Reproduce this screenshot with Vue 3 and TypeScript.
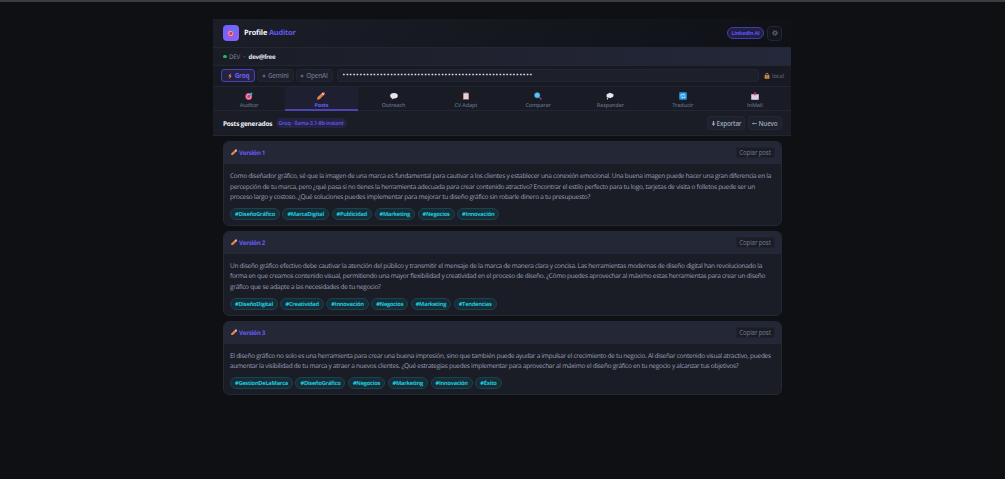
<script setup lang="ts">
interface Tab { id: string; label: string }
interface Post { title: string; lines: string[]; tags: string[] }

const tabs: Tab[] = [
  { id: 'target', label: 'Auditor' },
  { id: 'pencil', label: 'Posts' },
  { id: 'speech', label: 'Outreach' },
  { id: 'clipboard', label: 'CV Adapt' },
  { id: 'search', label: 'Comparar' },
  { id: 'thought', label: 'Responder' },
  { id: 'refresh', label: 'Traducir' },
  { id: 'mail', label: 'InMail' },
]

const posts: Post[] = [
  {
    title: 'Versión 1',
    lines: [
      'Como diseñador gráfico, sé que la imagen de una marca es fundamental para cautivar a los clientes y establecer una conexión emocional. Una buena imagen puede hacer una gran diferencia en la',
      'percepción de tu marca, pero ¿qué pasa si no tienes la herramienta adecuada para crear contenido atractivo? Encontrar el estilo perfecto para tu logo, tarjetas de visita o folletos puede ser un',
      'proceso largo y costoso. ¿Qué soluciones puedes implementar para mejorar tu diseño gráfico sin robarle dinero a tu presupuesto?',
    ],
    tags: ['#DiseñoGráfico', '#MarcaDigital', '#Publicidad', '#Marketing', '#Negocios', '#Innovación'],
  },
  {
    title: 'Versión 2',
    lines: [
      'Un diseño gráfico efectivo debe cautivar la atención del público y transmitir el mensaje de la marca de manera clara y concisa. Las herramientas modernas de diseño digital han revolucionado la',
      'forma en que creamos contenido visual, permitiendo una mayor flexibilidad y creatividad en el proceso de diseño. ¿Cómo puedes aprovechar al máximo estas herramientas para crear un diseño',
      'gráfico que se adapte a las necesidades de tu negocio?',
    ],
    tags: ['#DiseñoDigital', '#Creatividad', '#Innovación', '#Negocios', '#Marketing', '#Tendencias'],
  },
  {
    title: 'Versión 3',
    lines: [
      'El diseño gráfico no solo es una herramienta para crear una buena impresión, sino que también puede ayudar a impulsar el crecimiento de tu negocio. Al diseñar contenido visual atractivo, puedes',
      'aumentar la visibilidad de tu marca y atraer a nuevos clientes. ¿Qué estrategias puedes implementar para aprovechar al máximo el diseño gráfico en tu negocio y alcanzar tus objetivos?',
    ],
    tags: ['#GestionDeLaMarca', '#DiseñoGráfico', '#Negocios', '#Marketing', '#Innovación', '#Éxito'],
  },
]
const maskedKey: string = '•'.repeat(56)
</script>

<template>
  <svg class="defs" aria-hidden="true">
    <symbol id="target" viewBox="0 0 16 16">
      <circle cx="7.5" cy="9" r="6.8" fill="#e64c79" />
      <circle cx="7.5" cy="9" r="4.9" fill="#d8bfd4" />
      <circle cx="7.5" cy="9" r="3.4" fill="#df3f70" />
      <path d="M7.5 9 13 3.5" stroke="#35577d" stroke-width="1.3" />
      <path d="M9.5 6.5V2.8L13.2.3l.4 2 2.1.5-2.5 3.7z" fill="#29a5dd" />
    </symbol>
    <symbol id="pencil" viewBox="0 0 16 16">
      <path d="M1 15 1.5 10.5 11 2l3 3-9 9z" fill="#f28a4b" stroke="#f28a4b" stroke-width="1" />
      <path d="m4 12 8-8" stroke="#d8653b" stroke-width="1.3" />
      <path d="m9.5 3 2-2 3.5 3.5-2 2z" fill="#e6d9df" />
      <path d="M11.5 1.5Q13 0 15 1t-.5 3.5z" fill="#ef6385" />
    </symbol>
    <symbol id="speech" viewBox="0 0 16 16">
      <ellipse cx="8" cy="7.5" rx="7.6" ry="5.3" fill="#e9e4f2" />
      <path d="m4 10-.5 5 5-3z" fill="#e0d6ed" />
    </symbol>
    <symbol id="clipboard" viewBox="0 0 16 16">
      <rect x="2" y="1.5" width="12" height="14" rx="1" fill="#b56e52" />
      <path d="M3.5 3h9v11h-9z" fill="#e5dcec" />
      <path d="M5.5 1h5v3h-5z" fill="#a69bb0" />
      <path d="M5 7h6M5 9.5h6M5 12h4" stroke="#b9adc2" stroke-width=".8" />
    </symbol>
    <symbol id="search" viewBox="0 0 16 16">
      <path d="m10 10 5 5" stroke="#87418e" stroke-width="3" />
      <circle cx="6.4" cy="6.4" r="5.5" fill="#55c7f5" stroke="#397fa7" stroke-width="1" />
    </symbol>
    <symbol id="thought" viewBox="0 0 16 16">
      <path d="M3 11Q0 10 1 6.5 1 3 5 3q3-3 6 0 5 0 4 4 0 4-4 4-3 2-5 0-1 1-3 0z" fill="#e9e4f2" />
      <circle cx="3" cy="13.5" r="1.5" fill="#e9e4f2" />
    </symbol>
    <symbol id="refresh" viewBox="0 0 16 16">
      <rect x=".5" y=".5" width="15" height="15" rx="1" fill="#2799e8" />
      <path d="M4 9V5h7M9 3l2 2-2 2M12 7v4H5m2-2-2 2 2 2" fill="none" stroke="#cceaff" stroke-width="1.4" />
    </symbol>
    <symbol id="mail" viewBox="0 0 16 16">
      <path d="M.5 4.5h15v11H.5z" fill="#e7d9ec" />
      <path d="m1 5 7 6 7-6M1 15l5-5m9 5-5-5" fill="none" stroke="#b89fc4" stroke-width=".8" />
      <path d="M5 3.5h1.7V.5h2.6v3H11L8 8z" fill="#e43372" />
    </symbol>
    <symbol id="bolt" viewBox="0 0 16 16"><path d="M10 0 3.5 8.5h3.7L6 16l6.5-9H8.8z" fill="#ff8849" /></symbol>
    <symbol id="lock" viewBox="0 0 16 16">
      <path d="M4.5 8V4.5a3.5 3.5 0 0 1 7 0V8" fill="none" stroke="#a99ba5" stroke-width="2" />
      <rect x="1.5" y="6" width="13" height="9.5" rx="1.2" fill="#d68a3d" />
      <path d="M8 9v3" stroke="#56382d" stroke-width="2" />
    </symbol>
    <symbol id="gear" viewBox="0 0 16 16">
      <circle cx="8" cy="8" r="5" fill="none" stroke="#7c8699" stroke-width="1.8" />
      <circle cx="8" cy="8" r="6.6" fill="none" stroke="#7c8699" stroke-width="1.4" stroke-dasharray="2 2.15" />
      <circle cx="8" cy="8" r="1.5" fill="#7c8699" />
    </symbol>
    <symbol id="diamond" viewBox="0 0 16 16"><path d="M8 0 11 5l5 3-5 3-3 5-3-5-5-3 5-3z" fill="#5e6880" /></symbol>
    <symbol id="down" viewBox="0 0 16 16"><path d="M6 0h4v8h4l-6 8-6-8h4z" fill="#9aa6bc" /></symbol>
    <symbol id="left" viewBox="0 0 16 16"><path d="M16 8H1m4-3.5L1.500 8 5 11.500" fill="none" stroke="#9aa6bc" stroke-width="2.400" /></symbol>
  </svg>
  <div class="page">
    <main class="app">
      <header class="header">
        <div class="logo"><svg class="ic8"><use href="#target" /></svg></div>
        <h1>Profile <span>Auditor</span></h1>
        <div class="ai">LinkedIn AI</div>
        <button class="gear"><svg class="ic6"><use href="#gear" /></svg></button>
      </header>
      <div class="status"><i /><span class="dev">DEV</span><span class="sep">·</span><b>dev@free</b></div>
      <div class="providers">
        <button class="prov on groq"><svg class="ic6"><use href="#bolt" /></svg><span>Groq</span></button>
        <button class="prov gemini"><svg class="ic4"><use href="#diamond" /></svg><span>Gemini</span></button>
        <button class="prov openai"><svg class="ic4"><use href="#diamond" /></svg><span>OpenAI</span></button>
        <div class="key">{{ maskedKey }}</div>
        <div class="local"><svg class="ic6"><use href="#lock" /></svg><span>local</span></div>
      </div>
      <nav class="tabs">
        <div v-for="t in tabs" :key="t.id" class="tab" :class="{ active: t.id === 'pencil' }">
          <svg class="ic8"><use :href="'#' + t.id" /></svg><span>{{ t.label }}</span>
        </div>
      </nav>
      <div class="toolbar">
        <h2>Posts generados</h2>
        <span class="model">Groq · llama-3.1-8b-instant</span>
        <button class="act"><svg class="ic5"><use href="#down" /></svg><span>Exportar</span></button>
        <button class="act second"><svg class="ic5"><use href="#left" /></svg><span>Nuevo</span></button>
      </div>
      <section class="list">
        <article v-for="p in posts" :key="p.title" class="card">
          <div class="head">
            <svg class="ic7"><use href="#pencil" /></svg><h3>{{ p.title }}</h3>
            <button class="copy">Copiar post</button>
          </div>
          <div class="body">
            <p><span v-for="l in p.lines" :key="l">{{ l }}</span></p>
            <div class="tags"><span v-for="t in p.tags" :key="t">{{ t }}</span></div>
          </div>
        </article>
      </section>
    </main>
  </div>
</template>

<style>
body { background: #0f1014; }
</style>
<style scoped>
* { box-sizing: border-box; }
.defs { display: none; }
.page { height: 479px; overflow: hidden; border-top: 2px solid #3b3c40; background: #0f1014; padding-top: 17px; font-family: "Open Sans", "Noto Sans", sans-serif; font-size: 6.2px; color: #8d98ae; text-rendering: geometricPrecision; }
.app { width: 578px; margin-left: 213px; }
button { font: inherit; color: inherit; padding: 0; margin: 0; display: flex; align-items: center; justify-content: center; white-space: nowrap; }
h1, h2, h3, p { margin: 0; white-space: nowrap; }
svg { flex: none; display: block; }
.ic8 { width: 8px; height: 8px; }
.ic7 { width: 6.5px; height: 6.5px; }
.ic6 { width: 6px; height: 6px; }
.ic5 { width: 5px; height: 5px; }
.ic4 { width: 4px; height: 4px; }
.header { height: 28px; display: flex; align-items: center; padding: 0 9px 0 10px; background: linear-gradient(135deg, #1c1e28, #0f1117); }
.logo { width: 16px; height: 16px; border-radius: 4px; background: linear-gradient(135deg, #6a60ff, #8c64fa); display: grid; place-items: center; margin-right: 5px; }
h1 { font-size: 7.4px; font-weight: 700; color: #f1f4fa; letter-spacing: -0.17px; }
h1 span { color: #6358f1; }
.ai { margin-left: auto; width: 37px; height: 12px; border: 1px solid #453da6; border-radius: 6px; background: #211f45; color: #6055f4; font-weight: 700; font-size: 5.4px; letter-spacing: -0.2px; display: grid; place-items: center; white-space: nowrap; }
.gear { width: 15px; height: 15px; border: 1px solid #232633; border-radius: 4px; background: #14161d; margin-left: 3px; }
.status { height: 18.5px; display: flex; align-items: center; padding-left: 10px; border-top: 1px solid #232633; border-bottom: 1px solid #232633; background: linear-gradient(90deg, #1a1c26, #25283a); font-size: 6.2px; letter-spacing: -0.22px; }
.status i { width: 3.5px; height: 3.5px; border-radius: 50%; background: #20bd5b; margin-right: 2.5px; }
.dev { color: #7f8a9f; }
.sep { color: #78839a; margin: 0 3.5px; font-weight: 700; }
.status b { color: #e4e9f3; font-weight: 700; letter-spacing: -0.3px; }
.providers { height: 20.5px; display: flex; align-items: center; gap: 2px; padding: 0 7px 0 8px; background: #181a23; }
.prov { height: 13px; border: 1px solid #232633; border-radius: 3px; background: #1d1f2b; color: #66718a; font-weight: 600; gap: 2px; font-size: 6.4px; letter-spacing: -0.23px; }
.prov.on { background: #242343; border-color: #4a43b0; color: #6a60f6; font-weight: 700; }
.groq { width: 34px; }
.gemini { width: 36.5px; }
.openai { width: 37px; }
.key { height: 13px; margin-left: 2px; flex: 1; border: 1px solid #222532; border-radius: 3px; background: #1d1f2b; color: #eef2f8; font-size: 7px; line-height: 11px; letter-spacing: 0.77px; padding-left: 5px; white-space: nowrap; }
.local { margin-left: 3px; display: flex; align-items: center; gap: 2px; color: #657088; font-size: 5.8px; letter-spacing: -0.1px; }
.tabs { height: 25px; display: grid; grid-template-columns: repeat(8, 1fr); background: #191b25; border-top: 1px solid #222532; border-bottom: 1px solid #232634; }
.tab { display: flex; flex-direction: column; align-items: center; padding-top: 4.5px; gap: 2px; color: #606b84; font-size: 5.4px; letter-spacing: -0.1px; font-weight: 600; line-height: 7px; }
.tab.active { color: #675df3; background: #1e1f31; border-bottom: 2px solid #4c44b5; margin-bottom: -1px; font-weight: 700; }
.toolbar { height: 25px; display: flex; align-items: center; padding: 0 9.5px 0 10px; background: #1a1c26; border-bottom: 1px solid #222532; }
h2 { width: 48px; font-size: 6.5px; letter-spacing: -0.25px; color: #edf1f8; font-weight: 700; }
.model { width: 71px; height: 10px; border-radius: 5px; margin-left: 4.5px; background: #242342; color: #6459ee; font-size: 5.5px; letter-spacing: -0.2px; font-weight: 600; display: grid; place-items: center; white-space: nowrap; }
.act { width: 38px; height: 13.5px; margin-left: auto; border: 1px solid #242735; border-radius: 3px; background: #1f212d; color: #98a3b9; font-size: 6.4px; letter-spacing: -0.24px; font-weight: 600; gap: 1px; }
.act.second { width: 34px; margin-left: 2.5px; gap: 2px; }
.list { padding: 5px 9.5px 5px 10px; display: flex; flex-direction: column; gap: 5px; }
.card { border: 1px solid #242735; border-radius: 6px; background: #1a1c26; overflow: hidden; }
.head { height: 22px; display: flex; align-items: center; padding: 0 6px 0 6.5px; background: #242736; border-bottom: 1px solid #262938; }
h3 { margin-left: 2px; font-size: 6.3px; letter-spacing: -0.33px; color: #665bf5; font-weight: 700; }
.copy { margin-left: auto; width: 39px; height: 11px; border: 1px solid #20232e; border-radius: 2px; background: #1a1c26; color: #717c94; font-size: 6.2px; letter-spacing: -0.17px; }
.body { padding: 7px 6px 5px; }
p { font-size: 6.5px; letter-spacing: -0.27px; line-height: 10.6px; color: #9aa5bb; }
p span { display: block; }
.tags { display: flex; gap: 2.5px; margin-top: 5px; }
.tags span { height: 12px; padding: 0 4px; border: 1px solid #174451; border-radius: 6px; background: #182c36; color: #1fc6dd; font-weight: 700; font-size: 5.7px; letter-spacing: -0.26px; line-height: 10px; white-space: nowrap; }
</style>
